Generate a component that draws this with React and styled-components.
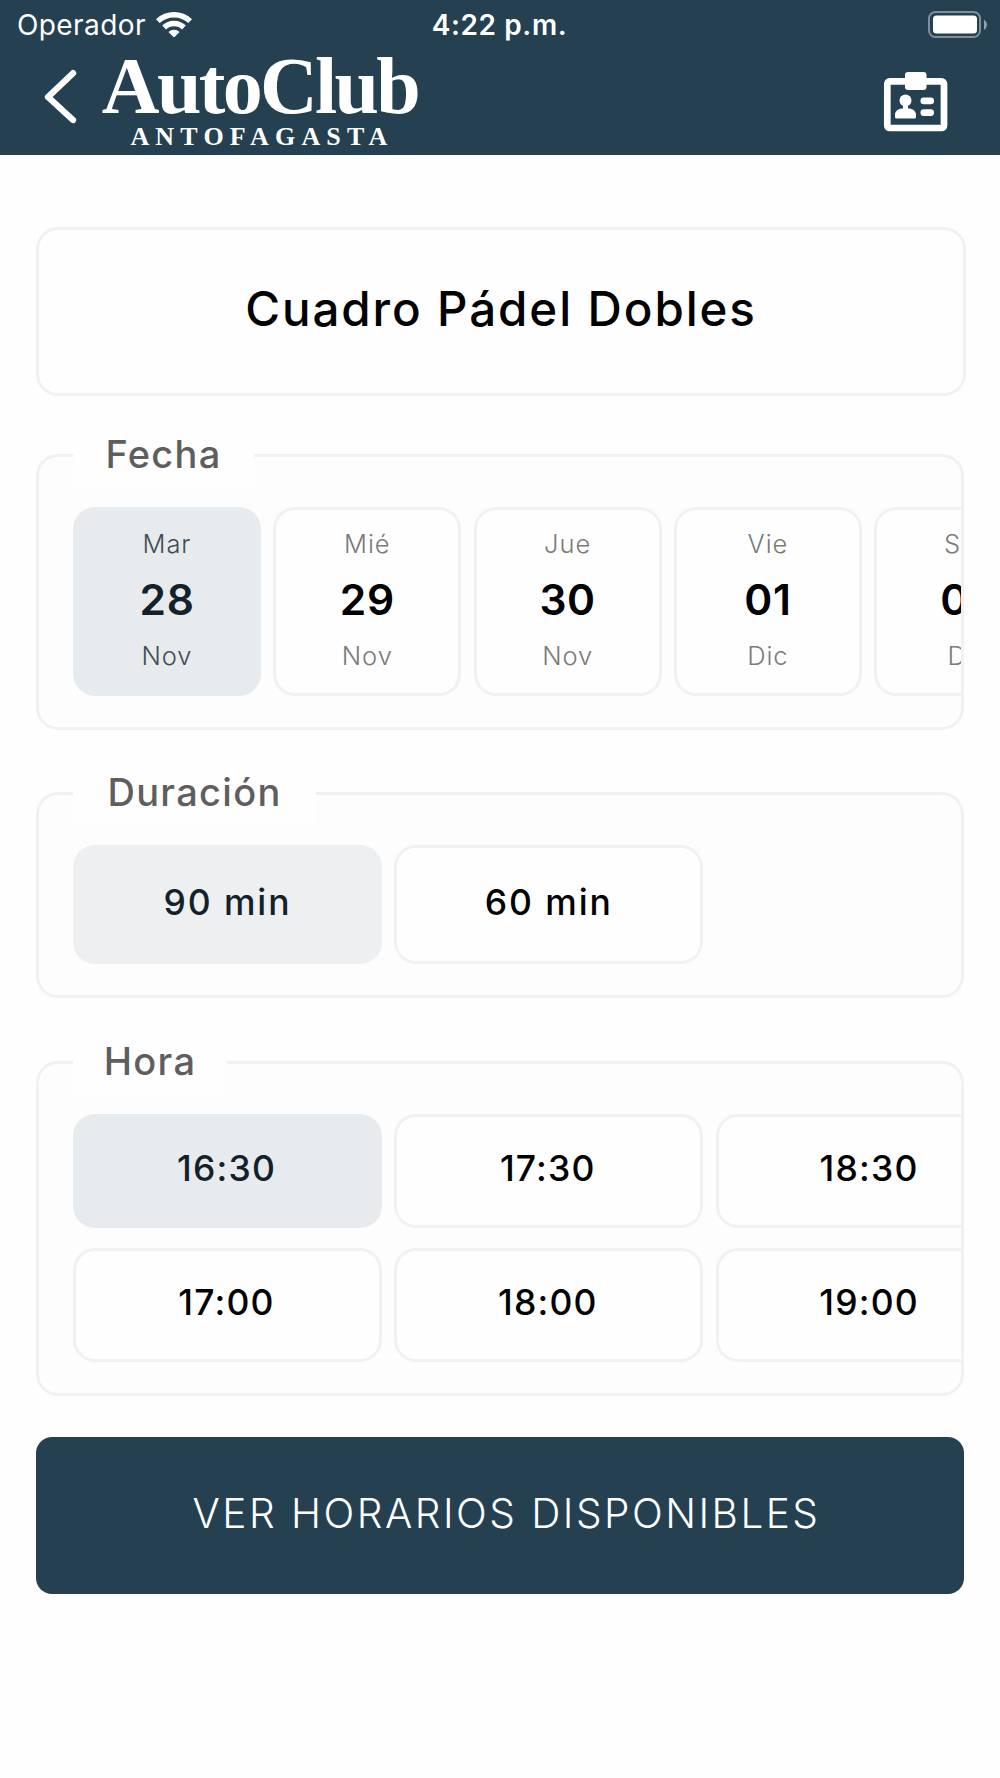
import { useState } from "react";
import styled, { createGlobalStyle } from "styled-components";

const GlobalStyle = createGlobalStyle`
    * {
        box-sizing: border-box;
    }

    body {
        margin: 0;
        background-color: #fefefe;
        font-family: "Inter", "Liberation Sans", sans-serif;
        color: #000;
    }

    button {
        font-family: inherit;
        color: inherit;
        padding: 0;
        cursor: pointer;
    }
`;

const Screen = styled.div`
    width: 1000px;
    height: 1778px;
    overflow: hidden;
`;

const Header = styled.header`
    height: 155px;
    background-color: #254050;
    color: #fff;
`;

const StatusBar = styled.div`
    display: grid;
    grid-template-columns: 1fr auto 1fr;
    align-items: center;
    height: 50px;
    padding: 0 12px 0 17px;
    line-height: 34px;
`;

const Carrier = styled.div`
    display: flex;
    align-items: center;
    gap: 9px;
    font-size: 28px;
    letter-spacing: 0.4px;
`;

const Clock = styled.div`
    margin-right: 6px;
    font-size: 28px;
    font-weight: 600;
    letter-spacing: 0.6px;
`;

const Battery = styled.svg`
    justify-self: end;
`;

const NavBar = styled.div`
    display: flex;
    align-items: flex-start;
    height: 105px;
    padding: 0 51px 0 44px;
`;

const BackButton = styled.button`
    display: flex;
    margin-top: 19px;
    border: none;
    background: none;
`;

const Logo = styled.div`
    display: flex;
    flex-direction: column;
    align-items: center;
    width: 320px;
    margin-left: 22px;
    font-family: "Liberation Serif", serif;
    font-weight: 700;
    white-space: nowrap;
`;

const LogoName = styled.span`
    font-size: 80px;
    line-height: 73px;
    letter-spacing: -2.7px;
`;

const LogoCity = styled.span`
    margin-top: 1px;
    padding-left: 4px;
    font-size: 26px;
    line-height: 26px;
    letter-spacing: 6.2px;
`;

const CardButton = styled.button`
    display: flex;
    margin-top: 21px;
    margin-left: auto;
    border: none;
    background: none;
`;

const Main = styled.main`
    display: flex;
    flex-direction: column;
    padding: 72px 36px 0;
`;

const Title = styled.h1`
    display: flex;
    align-items: center;
    justify-content: center;
    width: 930px;
    height: 169px;
    margin: 0 0 58px;
    padding-bottom: 6px;
    border: 3px solid #f1f1f1;
    border-radius: 22px;
    font-size: 47.5px;
    font-weight: 500;
    letter-spacing: 1.9px;
`;

const Panel = styled.section`
    height: ${(props) => props.$height}px;
    margin-bottom: ${(props) => props.$gap}px;
    padding-left: 34px;
    border: 3px solid #f1f1f1;
    border-radius: 22px;
    background-color: #fdfdfd;
`;

const Legend = styled.h2`
    width: ${(props) => props.$width}px;
    height: 66px;
    margin: -34px 0 18px;
    background-color: #fefefe;
    font-size: 38px;
    font-weight: 500;
    line-height: 63px;
    letter-spacing: 1.3px;
    text-align: center;
    color: #5e5e5e;
`;

const Scroller = styled.div`
    display: flex;
    gap: 12.3px;
    overflow: hidden;
`;

const TimeGrid = styled.div`
    display: grid;
    grid-template-rows: repeat(2, 114px);
    grid-auto-flow: column;
    grid-auto-columns: 309px;
    gap: 20px 12.3px;
    overflow: hidden;
`;

const Option = styled.button`
    flex-shrink: 0;
    border: 3px solid ${(props) => (props.$active ? "transparent" : "#f1f1f1")};
    border-radius: 22px;
    background-color: ${(props) => (props.$active ? "#e7ebee" : "#fefefe")};
    background-clip: border-box;
    color: ${(props) => (props.$active ? "#12212a" : "#000")};
`;

const DateOption = styled(Option)`
    display: flex;
    flex-direction: column;
    align-items: center;
    width: 188px;
    height: 189px;
    padding-top: 18px;
`;

const DateLabel = styled.span`
    font-size: 25.5px;
    font-weight: 350;
    line-height: 32px;
    letter-spacing: 0.9px;
    color: ${(props) => (props.$active ? "#3f4d55" : "#7a7a7a")};
`;

const DateNumber = styled.span`
    font-size: 42.5px;
    font-weight: 600;
    line-height: 80px;
    letter-spacing: 0.6px;
`;

const DurationOption = styled(Option)`
    width: 309px;
    height: 119px;
    padding-bottom: 4px;
    background-color: ${(props) => (props.$active ? "#edeff1" : "#fefefe")};
    font-size: 35.5px;
    font-weight: 500;
    letter-spacing: 1.9px;
`;

const TimeOption = styled(Option)`
    padding-right: 2px;
    padding-bottom: 5px;
    font-size: 35.5px;
    font-weight: 500;
    letter-spacing: 1.2px;
`;

const SubmitButton = styled.button`
    width: 928px;
    height: 157px;
    padding: 0 0 4px 13px;
    border: none;
    border-radius: 16px;
    background-color: #254050;
    color: #fff;
    font-size: 40.5px;
    font-weight: 350;
    letter-spacing: 2.5px;
`;

const dates = [
    { weekday: "Mar", day: "28", month: "Nov" },
    { weekday: "Mié", day: "29", month: "Nov" },
    { weekday: "Jue", day: "30", month: "Nov" },
    { weekday: "Vie", day: "01", month: "Dic" },
    { weekday: "Sáb", day: "02", month: "Dic" },
];

const durations = ["90 min", "60 min"];

const times = ["16:30", "17:00", "17:30", "18:00", "18:30", "19:00"];

function WifiIcon() {
    return (
        <svg width="38" height="28" viewBox="0 0 38 28" fill="#fff">
            <path d="M1 8.200a26 26 0 0 1 36 0l-3.700 3.900a20.800 20.800 0 0 0-28.600 0z" />
            <path d="M7.200 14.600a17 17 0 0 1 23.600 0l-3.800 3.900a11.700 11.700 0 0 0-16 0z" />
            <path d="M13.400 20.900a8.300 8.300 0 0 1 11.200 0l-4.800 4.900q-.8.700-1.600 0z" />
        </svg>
    );
}

function BatteryIcon() {
    return (
        <Battery width="60" height="28" viewBox="0 0 60 28">
            <rect
                x="1"
                y="1"
                width="51"
                height="25"
                rx="6.500"
                fill="none"
                stroke="#fff"
                strokeOpacity="0.420"
                strokeWidth="2"
            />
            <rect x="5" y="4.500" width="44" height="18" rx="3.500" fill="#fff" />
            <path d="M56 8.500q3 2.200 3 5.200t-3 5.200z" fill="#fff" fillOpacity="0.500" />
        </Battery>
    );
}

function CardIcon() {
    return (
        <svg width="66" height="61" viewBox="0 0 66 61" fill="#fff">
            <rect
                x="4.300"
                y="10.300"
                width="56.700"
                height="46.700"
                rx="2.500"
                fill="none"
                stroke="#fff"
                strokeWidth="6.700"
            />
            <rect x="22" y="1" width="21.500" height="18" rx="3" />
            <circle cx="22.500" cy="29.500" r="6" />
            <path d="M20 33h5v4.500c5 0 8 2.500 8 6.500v2q0 1.500-1.500 1.500h-18q-1.500 0-1.500-1.500v-2c0-4 3-6.500 8-6.500z" />
            <rect x="37.500" y="26.500" width="13.500" height="6.700" rx="3.300" />
            <rect x="37.500" y="38.300" width="13.500" height="6.700" rx="3.300" />
        </svg>
    );
}

function AppHeader() {
    return (
        <Header>
            <StatusBar>
                <Carrier>
                    Operador
                    <WifiIcon />
                </Carrier>
                <Clock>4:22 p.m.</Clock>
                <BatteryIcon />
            </StatusBar>
            <NavBar>
                <BackButton aria-label="Volver">
                    <svg width="34" height="56" viewBox="0 0 34 56">
                        <path
                            d="M29 4.200 4 28l25 23"
                            fill="none"
                            stroke="#fff"
                            strokeWidth="6.300"
                            strokeLinecap="round"
                            strokeLinejoin="round"
                        />
                    </svg>
                </BackButton>
                <Logo>
                    <LogoName>AutoClub</LogoName>
                    <LogoCity>ANTOFAGASTA</LogoCity>
                </Logo>
                <CardButton aria-label="Credencial">
                    <CardIcon />
                </CardButton>
            </NavBar>
        </Header>
    );
}

function App() {
    const [date, setDate] = useState("28");
    const [duration, setDuration] = useState("90 min");
    const [time, setTime] = useState("16:30");

    return (
        <Screen>
            <GlobalStyle />
            <AppHeader />
            <Main>
                <Title>Cuadro Pádel Dobles</Title>

                <Panel $height={276} $gap={62}>
                    <Legend $width={181}>Fecha</Legend>
                    <Scroller>
                        {dates.map(({ weekday, day, month }) => (
                            <DateOption
                                key={day}
                                $active={day === date}
                                onClick={() => setDate(day)}
                            >
                                <DateLabel $active={day === date}>{weekday}</DateLabel>
                                <DateNumber>{day}</DateNumber>
                                <DateLabel $active={day === date}>{month}</DateLabel>
                            </DateOption>
                        ))}
                    </Scroller>
                </Panel>

                <Panel $height={206} $gap={63}>
                    <Legend $width={243}>Duración</Legend>
                    <Scroller>
                        {durations.map((item) => (
                            <DurationOption
                                key={item}
                                $active={item === duration}
                                onClick={() => setDuration(item)}
                            >
                                {item}
                            </DurationOption>
                        ))}
                    </Scroller>
                </Panel>

                <Panel $height={335} $gap={41}>
                    <Legend $width={154}>Hora</Legend>
                    <TimeGrid>
                        {times.map((item) => (
                            <TimeOption
                                key={item}
                                $active={item === time}
                                onClick={() => setTime(item)}
                            >
                                {item}
                            </TimeOption>
                        ))}
                    </TimeGrid>
                </Panel>

                <SubmitButton>VER HORARIOS DISPONIBLES</SubmitButton>
            </Main>
        </Screen>
    );
}

export default App;
